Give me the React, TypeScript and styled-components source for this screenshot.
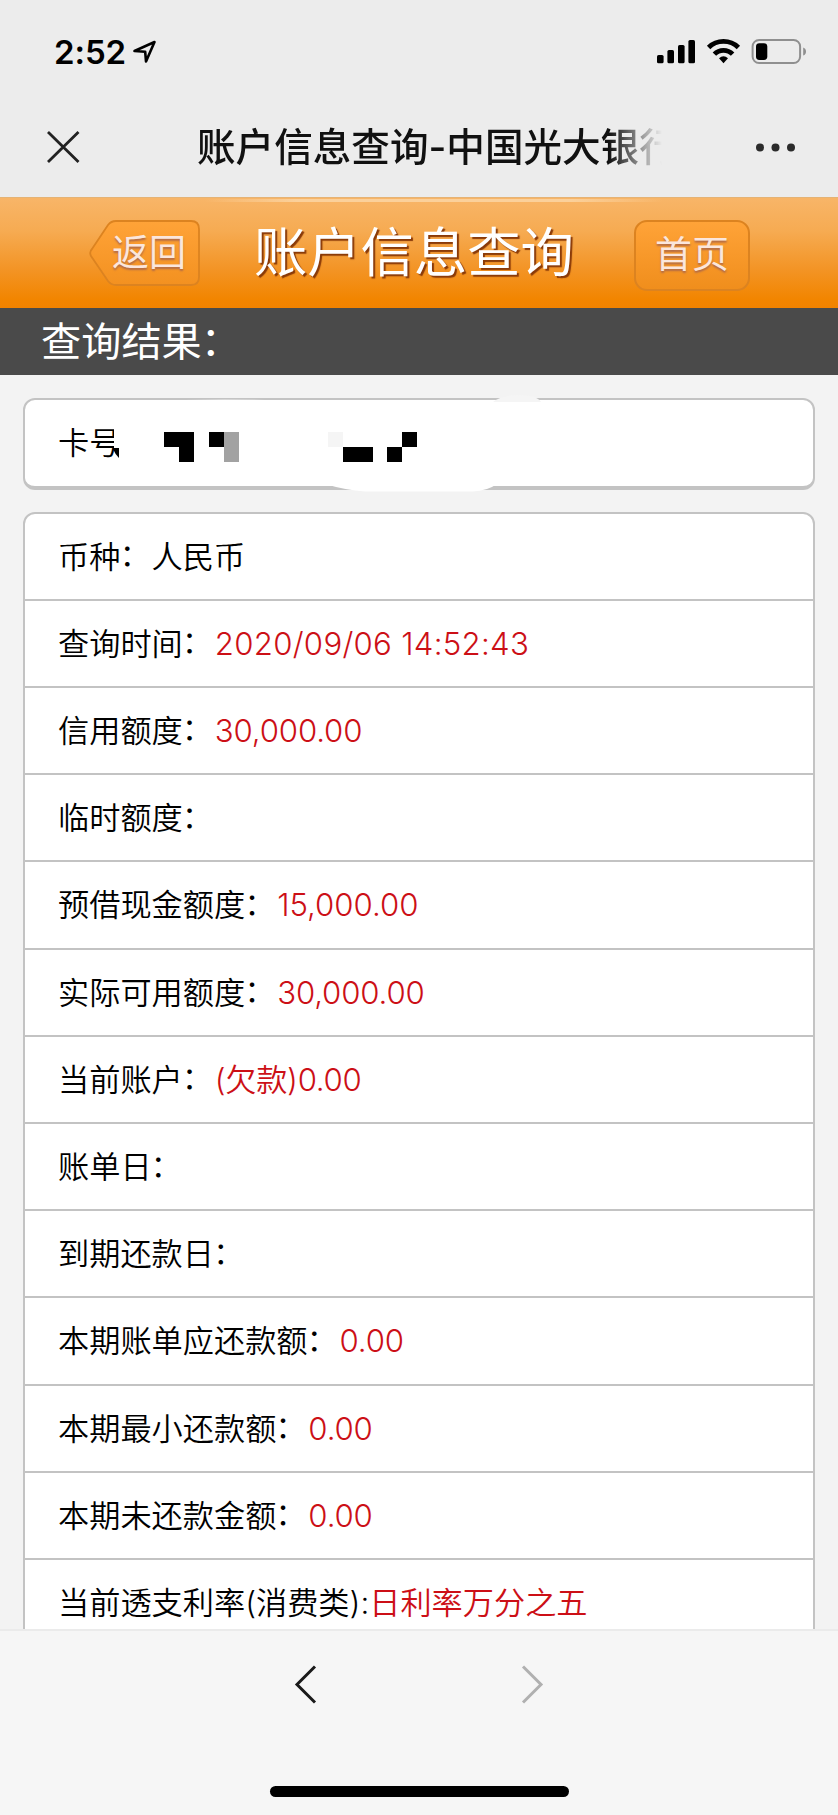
import React from 'react';
import styled, { createGlobalStyle } from 'styled-components';

const GlobalStyle = createGlobalStyle`
  * { box-sizing: border-box; }
  body {
    margin: 0;
    background: #f2f2f2;
    font-family: Inter, 'Noto Sans CJK SC', sans-serif;
    overflow: hidden;
  }
`;

const Screen = styled.div`
  display: flex;
  flex-direction: column;
  width: 838px;
  height: 1815px;
  overflow: hidden;
  background: #f3f3f3;
`;

const StatusBar = styled.div`
  flex: none;
  display: flex;
  justify-content: space-between;
  height: 104px;
  padding: 0 32px 0 54px;
  background: #ececec;
`;

const Clock = styled.div`
  display: flex;
  align-items: center;
  gap: 6px;
  height: 104px;
  font-size: 33px;
  font-weight: 600;
  line-height: 103px;
  color: #000;
`;

const ClockText = styled.span`
  letter-spacing: -0.1px;
`;

const NavBar = styled.div`
  flex: none;
  display: grid;
  grid-template-columns: 197px 467px 1fr;
  align-items: center;
  height: 93px;
  padding-bottom: 7px;
  background: #ececec;
`;

const CloseIcon = styled.svg`
  margin-left: 46px;
`;

const NavTitle = styled.div`
  overflow: hidden;
  white-space: nowrap;
  font-size: 38.6px;
  font-weight: 500;
  line-height: 62px;
  color: #111;
  mask-image: linear-gradient(to right, #000 412px, transparent 465px);
`;

const MoreIcon = styled.svg`
  margin-left: 91px;
`;

const Header = styled.header`
  flex: none;
  display: flex;
  align-items: flex-start;
  height: 111px;
  padding: 22px 0 0 88px;
  background:
    linear-gradient(to right, transparent, #fbd09a 20%, #fbd09a 80%, transparent) 205px 1px / 458px 3px no-repeat,
    linear-gradient(#f8b568 0%, #f6ab52 30%, #f39425 65%, #f28500 92%, #f18200 100%);
  border-top: 1px solid #e5b375;
`;

const HeaderTitle = styled.h1`
  width: 320px;
  margin: 0 0 0 53px;
  font-size: 53.3px;
  font-weight: 400;
  line-height: 66px;
  white-space: nowrap;
  color: #fff;
  text-shadow: 2px 2px 1px #8a3a08;
`;

const buttonText = `
  font-size: 37px;
  font-weight: 400;
  white-space: nowrap;
  color: #fbe6dc;
  text-shadow: 0 2px 2px #b06a48;
`;

const BackButton = styled.div`
  position: relative;
  width: 113px;
  height: 67px;
  padding-left: 24px;
  line-height: 66px;
  ${buttonText}
`;

const BackShape = styled.svg`
  position: absolute;
  inset: 0;
`;

const BackLabel = styled.span`
  position: relative;
`;

const HomeButton = styled.div`
  width: 116px;
  height: 71px;
  margin-left: 60px;
  border: 2px solid #dc8320;
  border-radius: 13px;
  background: linear-gradient(#ffa338, #f08e1c);
  text-align: center;
  line-height: 66px;
  ${buttonText}
`;

const SectionTitle = styled.h2`
  flex: none;
  height: 67px;
  margin: 0;
  padding-left: 41px;
  background: #4a4a4a;
  font-size: 40.2px;
  font-weight: 400;
  line-height: 68px;
  color: #fff;
`;

const Content = styled.main`
  flex: none;
  display: flex;
  flex-direction: column;
  gap: 22px;
  height: 1254px;
  padding: 23px 23px 0;
  overflow: hidden;
`;

const Card = styled.section<{ $thick?: boolean }>`
  flex: none;
  position: relative;
  border: 2px solid #c3c3c3;
  border-bottom-width: ${(p) => (p.$thick ? 4 : 2)}px;
  border-radius: 12px;
  background: #fff;
`;

const CardNumber = styled.div`
  height: 85.5px;
  padding-left: 33px;
  font-size: 31.2px;
  font-weight: 350;
  line-height: 87px;
  color: #000;
`;

const Redaction = styled.svg`
  position: absolute;
  left: -2px;
  top: -10px;
`;

const Row = styled.div`
  height: 87.22px;
  padding-left: 33px;
  border-bottom: 2px solid #c3c3c3;
  font-size: 31.2px;
  font-weight: 350;
  line-height: 87px;
  white-space: nowrap;
  color: #000;
`;

/* Full-width colon, raised to sit at the optical middle of the characters. */
const Colon = styled.span`
  position: relative;
  left: -1px;
  top: -1.5px;
`;

const Value = styled.span<{ $plain?: boolean; $spacing?: number }>`
  margin-left: ${(p) => (p.$spacing === undefined ? 0 : 0.8)}px;
  color: ${(p) => (p.$plain ? '#000' : '#cc0f16')};
  letter-spacing: ${(p) => p.$spacing ?? 0}px;
`;

const Toolbar = styled.footer`
  flex: none;
  display: flex;
  flex-direction: column;
  align-items: center;
  height: 186px;
  padding-top: 34px;
  border-top: 2px solid #ebebeb;
  background: #f6f6f6;
`;

const Arrows = styled.div`
  display: flex;
  gap: 202px;
  height: 121px;
`;

const HomeIndicator = styled.div`
  width: 299px;
  height: 11px;
  border-radius: 6px;
  background: #000;
`;

const rows: { label: string; value?: string; plain?: boolean; spacing?: number }[] = [
  { label: '币种：', value: '人民币', plain: true },
  { label: '查询时间：', value: '2020/09/06 14:52:43', spacing: 0.28 },
  { label: '信用额度：', value: '30,000.00', spacing: -0.15 },
  { label: '临时额度：' },
  { label: '预借现金额度：', value: '15,000.00', spacing: 0 },
  { label: '实际可用额度：', value: '30,000.00', spacing: -0.15 },
  { label: '当前账户：', value: '(欠款)0.00', spacing: -0.3 },
  { label: '账单日：' },
  { label: '到期还款日：' },
  { label: '本期账单应还款额：', value: '0.00', spacing: -0.15 },
  { label: '本期最小还款额：', value: '0.00', spacing: -0.15 },
  { label: '本期未还款金额：', value: '0.00', spacing: -0.15 },
  { label: '当前透支利率(消费类):', value: '日利率万分之五' },
];

function Label({ text }: { text: string }) {
  if (!text.endsWith('：')) return <>{text}</>;
  return (
    <>
      {text.slice(0, -1)}
      <Colon>：</Colon>
    </>
  );
}

export default function App() {
  return (
    <Screen>
      <GlobalStyle />
      <StatusBar>
        <Clock>
          <ClockText>2:52</ClockText>
          <svg width="26" height="26" viewBox="0 0 26 26" fill="none" stroke="#000" strokeWidth="2.6" strokeLinejoin="round">
            <path d="M2.5 12 L22.5 3 L14 22.5 L13.2 12.8 Z" />
          </svg>
        </Clock>
        <svg width="152" height="104" viewBox="0 0 152 104">
          <rect x="3" y="55" width="6.6" height="8.3" rx="1.6" />
          <rect x="13.4" y="50" width="6.6" height="13.3" rx="1.6" />
          <rect x="24" y="45" width="6.6" height="18.3" rx="1.6" />
          <rect x="34.4" y="40" width="6.6" height="23.3" rx="1.6" />
          <g fill="none" stroke="#000" strokeWidth="4.8">
            <path d="M54.6 47.4 A21.5 21.5 0 0 1 84.4 47.4" />
            <path d="M60.4 54.2 A12.6 12.6 0 0 1 78.6 54.2" />
          </g>
          <path d="M65 58.3 Q69.5 54.4 74 58.3 L69.5 63.2 Z" />
          <rect x="98.6" y="40" width="47.5" height="23" rx="6.5" fill="none" stroke="#8f8f8f" strokeWidth="2" />
          <rect x="102" y="43.2" width="11.3" height="16.8" rx="3.4" />
          <path d="M149.2 47.5 Q152 48.5 152 51.5 Q152 54.5 149.2 55.5 Z" fill="#8f8f8f" />
        </svg>
      </StatusBar>
      <NavBar>
        <CloseIcon width="34" height="34" viewBox="0 0 34 34" stroke="#222" strokeWidth="2.8">
          <path d="M2 2 L32.5 32 M32.5 2 L2 32" />
        </CloseIcon>
        <NavTitle>账户信息查询-中国光大银行</NavTitle>
        <MoreIcon width="42" height="10" viewBox="0 0 42 10" fill="#2b2b2b">
          <circle cx="5" cy="5.5" r="4" />
          <circle cx="20.5" cy="5.5" r="4" />
          <circle cx="36" cy="5.5" r="4" />
        </MoreIcon>
      </NavBar>
      <Header>
        <BackButton>
          <BackShape width="113" height="67" viewBox="0 0 113 67">
            <defs>
              <linearGradient id="back" x1="0" y1="0" x2="0" y2="1">
                <stop offset="0" stopColor="#ffa338" />
                <stop offset="1" stopColor="#f39120" />
              </linearGradient>
            </defs>
            <path
              d="M28 1 H103 Q111 1 111 9 V57 Q111 65 103 65 H28 Q23 65 20 61 L3 36 Q1 32 4 29 L20 5 Q23 1 28 1 Z"
              fill="url(#back)"
              stroke="#dc8320"
              strokeWidth="1.8"
            />
          </BackShape>
          <BackLabel>返回</BackLabel>
        </BackButton>
        <HeaderTitle>账户信息查询</HeaderTitle>
        <HomeButton>首页</HomeButton>
      </Header>
      <SectionTitle>
        <Label text="查询结果：" />
      </SectionTitle>
      <Content>
        <Card $thick>
          <CardNumber>卡号</CardNumber>
          <Redaction width="600" height="104" viewBox="0 0 600 104">
            <rect x="91" y="30" width="9" height="46" fill="#fff" />
            <path d="M90 58 L96 58 L96 68 Q92 64 90 59 Z" />
            <path d="M141 42 h30 v30 h-15 v-15 h-15 Z" />
            <rect x="186" y="42" width="15" height="15" />
            <rect x="201" y="42" width="15" height="30" fill="#a2a2a2" />
            <rect x="305" y="42" width="15" height="15" fill="#f5f5f5" />
            <rect x="320" y="57" width="30" height="15" />
            <rect x="364" y="57" width="15" height="15" />
            <rect x="379" y="42" width="15" height="15" />
            <path d="M162 10 Q202 9 242 10 L242 11 L162 11 Z" fill="#fff" opacity="0.7" />
            <path d="M470 12 Q476 6 494 5 Q514 5 518 12 Z" fill="#f5f5f5" />
            <path d="M302 94 Q322 100 342 101.5 H450 Q464 101 474 94 Z" fill="#fff" />
          </Redaction>
        </Card>
        <Card>
          {rows.map((row) => (
            <Row key={row.label}>
              <Label text={row.label} />
              {row.value && (
                <Value $plain={row.plain} $spacing={row.spacing}>
                  {row.value}
                </Value>
              )}
            </Row>
          ))}
        </Card>
      </Content>
      <Toolbar>
        <Arrows>
          <svg width="24" height="40" viewBox="0 0 24 40" fill="none" stroke="#1a1a1a" strokeWidth="3">
            <path d="M21 1.5 L3 19.5 L21 37.5" />
          </svg>
          <svg width="24" height="40" viewBox="0 0 24 40" fill="none" stroke="#b0b0b0" strokeWidth="3">
            <path d="M3 1.5 L21 19.5 L3 37.5" />
          </svg>
        </Arrows>
        <HomeIndicator />
      </Toolbar>
    </Screen>
  );
}
